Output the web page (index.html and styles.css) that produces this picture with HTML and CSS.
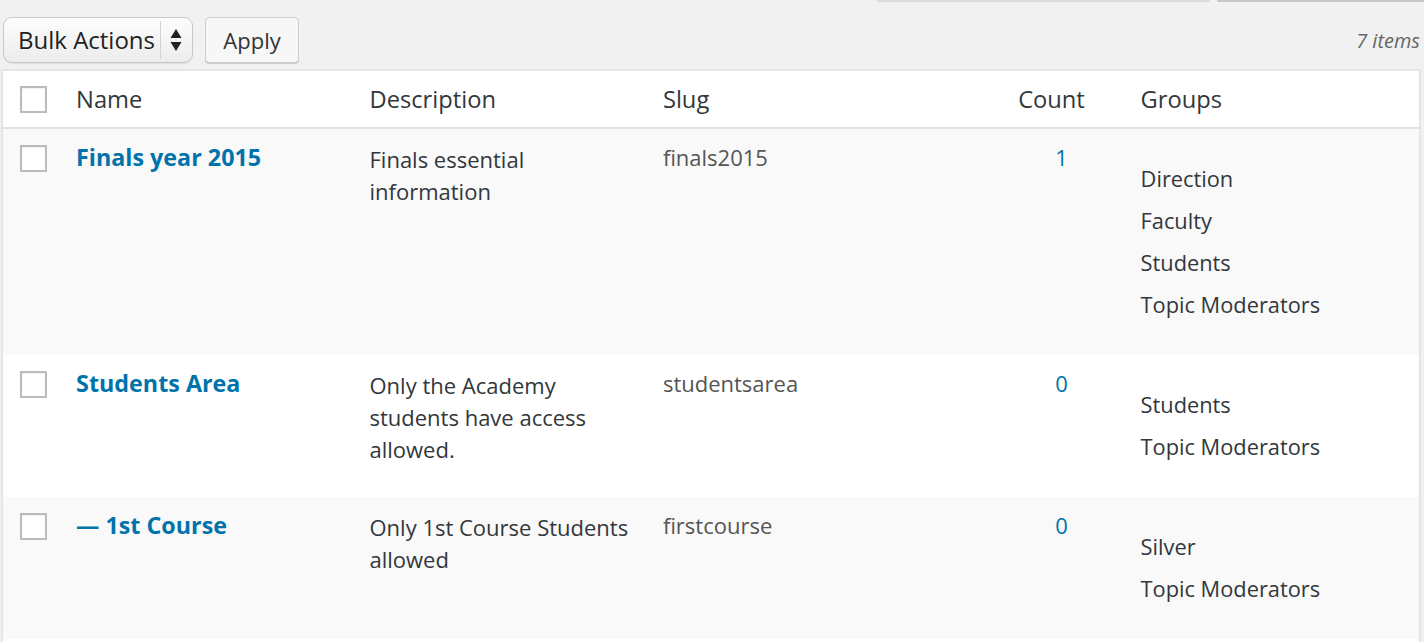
FILE: index.html
```html
<!DOCTYPE html>
<html lang="en">
<head>
    <meta charset="UTF-8">
    <meta name="viewport" content="width=device-width, initial-scale=1.0">
    <title>Forum Categories</title>
    <link rel="stylesheet" href="styles.css">
</head>
<body>

<div class="wrap">
    <!-- bottom edges of the search box above -->
    <div class="search-edge">
        <span class="search-input"></span>
        <span class="search-btn"></span>
    </div>

    <div class="tablenav">
        <div class="actions">
            <div class="select">
                <span class="select-label">Bulk Actions</span>
                <span class="select-arrows">
                    <svg width="12" height="24" viewBox="0 0 12 24">
                        <path d="M6 1 L11.5 10 L0.5 10 Z" fill="#222"/>
                        <path d="M0.5 14 L11.5 14 L6 23 Z" fill="#222"/>
                    </svg>
                </span>
            </div>
            <button class="button">Apply</button>
        </div>
        <span class="num-items">7 items</span>
    </div>

    <table class="list-table">
        <colgroup>
            <col class="c-check">
            <col class="c-name">
            <col class="c-desc">
            <col class="c-slug">
            <col class="c-count">
            <col class="c-groups">
        </colgroup>
        <thead>
            <tr>
                <th class="check"><span class="checkbox"></span></th>
                <th>Name</th>
                <th>Description</th>
                <th>Slug</th>
                <th class="count-head">Count</th>
                <th>Groups</th>
            </tr>
        </thead>
        <tbody>
            <tr class="alt">
                <td class="check"><span class="checkbox"></span></td>
                <td class="name"><a href="#">Finals year 2015</a></td>
                <td class="desc">Finals essential information</td>
                <td class="slug">finals2015</td>
                <td class="count"><a href="#">1</a></td>
                <td class="groups">
                    <ul>
                        <li>Direction</li>
                        <li>Faculty</li>
                        <li>Students</li>
                        <li>Topic Moderators</li>
                    </ul>
                </td>
            </tr>
            <tr>
                <td class="check"><span class="checkbox"></span></td>
                <td class="name"><a href="#">Students Area</a></td>
                <td class="desc">Only the Academy students have access allowed.</td>
                <td class="slug">studentsarea</td>
                <td class="count"><a href="#">0</a></td>
                <td class="groups">
                    <ul>
                        <li>Students</li>
                        <li>Topic Moderators</li>
                    </ul>
                </td>
            </tr>
            <tr class="alt">
                <td class="check"><span class="checkbox"></span></td>
                <td class="name"><a href="#">— 1st Course</a></td>
                <td class="desc">Only 1st Course Students allowed</td>
                <td class="slug">firstcourse</td>
                <td class="count"><a href="#">0</a></td>
                <td class="groups">
                    <ul>
                        <li>Silver</li>
                        <li>Topic Moderators</li>
                    </ul>
                </td>
            </tr>
            <!-- next row, only its top edge shows -->
            <tr>
                <td class="check"><span class="checkbox"></span></td>
                <td class="name"></td>
                <td class="desc"></td>
                <td class="slug"></td>
                <td class="count"></td>
                <td class="groups"></td>
            </tr>
        </tbody>
    </table>
</div>

</body>
</html>
```

FILE: styles.css
```css
* {
    margin: 0;
    padding: 0;
    box-sizing: border-box;
}

body {
    background: #f1f1f1;
    color: #32373c;
    font-family: 'Open Sans', sans-serif;
    overflow: hidden;
}

.wrap {
    padding: 0 3px 0 1px;
}

/* leftovers of the search form sitting above */
.search-edge {
    display: flex;
    justify-content: flex-end;
    gap: 7px;
    height: 2px;
    margin-right: -3px;
}

.search-input {
    width: 333px;
    background: #dcdcdc;
}

.search-btn {
    width: 207px;
    background: #c6c6c6;
    border-bottom-left-radius: 4px;
}

.tablenav {
    display: flex;
    justify-content: space-between;
    align-items: center;
    height: 46px;
    margin: 15px 0 6px 2px;
}

.actions {
    display: flex;
    gap: 12px;
}

.select {
    display: flex;
    align-items: center;
    width: 190px;
    height: 46px;
    border: 1px solid #c9c9c9;
    border-radius: 9px;
    background: linear-gradient(#fdfdfd, #ececec);
    box-shadow: 0 1px 1px rgba(0, 0, 0, 0.08);
}

.select-label {
    font-size: 24px;
    color: #222;
    padding-left: 14px;
    width: 157px;
    border-right: 1px solid #d2d2d2;
    line-height: 38px;
    white-space: nowrap;
}

.select-arrows {
    display: flex;
    padding-left: 9px;
}

.button {
    width: 94px;
    height: 46px;
    border: 1px solid #cccccc;
    border-radius: 4px;
    background: #f7f7f7;
    box-shadow: 0 1px 0 #cccccc;
    color: #333;
    font-family: 'Open Sans', sans-serif;
    font-size: 22px;
}

.num-items {
    font-style: italic;
    font-size: 20px;
    color: #666;
    margin-right: 1px;
}

.list-table {
    width: 1420px;
    table-layout: fixed;
    border-collapse: collapse;
    background: #fff;
    border: 2px solid #e5e5e5;
}

.c-check { width: 62px; }
.c-name { width: 293px; }
.c-desc { width: 293px; }
.c-slug { width: 343px; }
.c-count { width: 134px; }
.c-groups { width: 291px; }

thead th {
    height: 58px;
    text-align: left;
    font-weight: normal;
    font-size: 23.7px;
    color: #32373c;
    padding: 0 12px;
    border-bottom: 2px solid #e1e1e1;
}

th.count-head {
    text-align: center;
    padding-right: 32px;
}

.checkbox {
    display: block;
    width: 27px;
    height: 27px;
    border: 2px solid #bbbbbb;
    background: #fff;
    box-shadow: inset 0 1px 2px rgba(0, 0, 0, 0.07);
}

th.check {
    padding: 0 0 0 17px;
}

tbody td {
    vertical-align: top;
    padding: 12px;
    font-size: 22px;
    line-height: 32px;
}

tbody tr.alt {
    background: #f9f9f9;
}

td.check {
    padding: 16px 0 0 17px;
}

td.name a {
    font-size: 23.3px;
    font-weight: bold;
    color: #0073aa;
    text-decoration: none;
}

td.desc {
    padding: 14px 16px 12px 12px;
    line-height: 32px;
    color: #32373c;
}

td.slug {
    color: #555;
}

td.count {
    text-align: center;
}

td.count a {
    color: #0073aa;
    text-decoration: none;
}

.groups ul {
    list-style: none;
    margin: 17px 0;
    font-size: 21.8px;
}

.groups li {
    line-height: 42px;
}
```
